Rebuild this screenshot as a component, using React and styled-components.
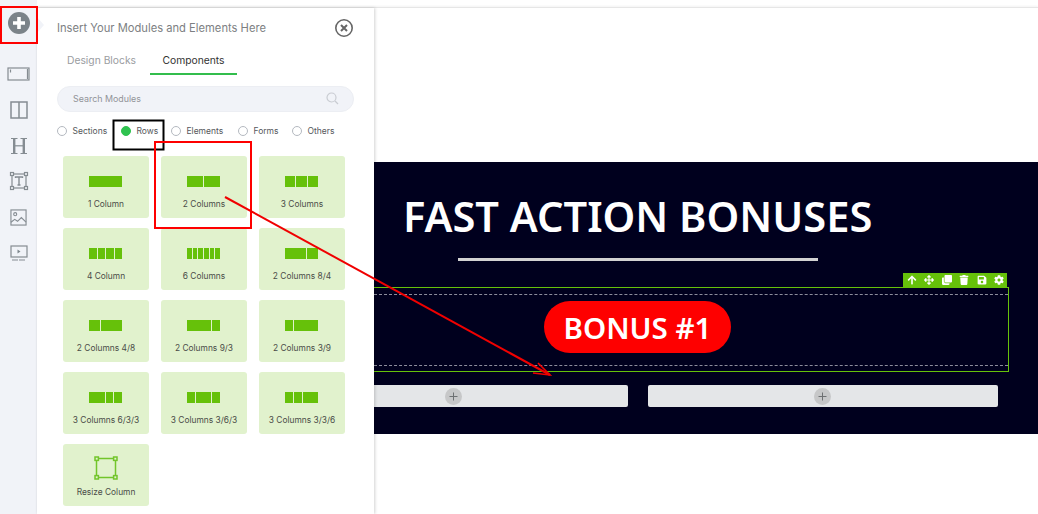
import React from 'react';
import styled, { createGlobalStyle } from 'styled-components';
import { FaArrowUp, FaArrowsAlt, FaClone, FaTrash, FaSave, FaCog } from 'react-icons/fa';

const GlobalStyle = createGlobalStyle`
  html, body { margin: 0; padding: 0; background: #fff; overflow: hidden; }
  * { box-sizing: border-box; }
`;

const UI_FONT = `Inter, "Noto Sans", sans-serif`;

const Page = styled.div`
  position: relative;
  width: 1038px;
  height: 514px;
  display: flex;
  overflow: hidden;
  background: #fff;
  font-family: ${UI_FONT};
`;

const Rail = styled.nav`
  width: 37px;
  flex: none;
  background: #f1f3f8;
  display: flex;
  flex-direction: column;
  align-items: center;
  padding-top: 11px;
`;

const AddButton = styled.div`
  width: 24px;
  height: 24px;
  margin-bottom: 27px;
  display: flex;
`;

const RailIcon = styled.div`
  width: 24px;
  height: 24px;
  margin-bottom: 11.8px;
  display: flex;
  align-items: center;
  justify-content: center;
`;

const Main = styled.div`
  flex: 1;
  display: flex;
  margin-top: 7px;
  border-top: 1px solid #e6e6e6;
  box-shadow: 0 -1px 2px rgba(0, 0, 0, 0.05);
`;

const Panel = styled.aside`
  position: relative;
  width: 337px;
  flex: none;
  background: #fff;
  box-shadow: 1px 0 3px rgba(0, 0, 0, 0.18);
  padding: 0 20px;
  z-index: 1;
  display: flex;
  flex-direction: column;
`;

const PanelNotch = styled.div`
  position: absolute;
  left: 0;
  top: 9px;
  width: 0;
  height: 0;
  border-left: 7px solid #f1f3f8;
  border-top: 8px solid transparent;
  border-bottom: 8px solid transparent;
`;

const PanelHead = styled.div`
  height: 39px;
  display: flex;
  align-items: center;
  justify-content: space-between;
`;

const PanelTitle = styled.div`
  font-size: 11.2px;
  color: #7d7f83;
  font-weight: 400;
`;

const Tabs = styled.div`
  display: flex;
  gap: 4px;
  height: 28px;
`;

const Tab = styled.div`
  width: ${(p) => p.$w}px;
  display: flex;
  justify-content: center;
  align-items: center;
  font-size: 10.3px;
  color: ${(p) => (p.$active ? '#333' : '#9a9c9f')};
  border-bottom: 2px solid ${(p) => (p.$active ? '#32bd4c' : 'transparent')};
`;

const SearchBox = styled.div`
  margin-top: 11px;
  height: 26px;
  width: 297px;
  border-radius: 13px;
  background: #f1f3f8;
  border: 1px solid #eceef3;
  display: flex;
  align-items: center;
  justify-content: space-between;
  padding: 0 14px 1px 15px;
  font-size: 8.9px;
  color: #929499;
`;

const RadioRow = styled.div`
  display: flex;
  align-items: center;
  margin-top: 13px;
  height: 12px;
`;

const Radio = styled.div`
  display: flex;
  align-items: center;
  gap: 5.5px;
  width: ${(p) => p.$w}px;
  font-size: 8.5px;
  color: #55575b;
`;

const RadioDot = styled.span`
  width: 10px;
  height: 10px;
  border-radius: 50%;
  flex: none;
  background: ${(p) => (p.$on ? '#2fc24f' : '#fff')};
  border: 1px solid ${(p) => (p.$on ? '#2fc24f' : '#b4b9c0')};
`;

const CardGrid = styled.div`
  display: grid;
  grid-template-columns: repeat(3, 86px);
  grid-auto-rows: 62px;
  column-gap: 12px;
  row-gap: 10px;
  margin: 19px 0 0 6px;
`;

const Card = styled.div`
  background: #e1f2cd;
  border-radius: 3px;
  display: flex;
  flex-direction: column;
  align-items: center;
  padding-top: 20px;
`;

const ResizeCard = styled(Card)`
  padding-top: 12px;
`;

const ColBars = styled.div`
  display: flex;
  gap: 1px;
  width: 33px;
  height: 11px;
  margin-right: 1px;
`;

const ColBar = styled.span`
  flex: ${(p) => p.$span} 0 0;
  background: #66c10a;
`;

const CardLabel = styled.div`
  margin-top: 12px;
  font-size: 8.4px;
  line-height: 10px;
  color: #4a4c48;
  white-space: nowrap;
`;

const ResizeLabel = styled(CardLabel)`
  margin-top: 7px;
`;

const Canvas = styled.main`
  flex: 1;
  padding-top: 154px;
  min-width: 0;
`;

const Section = styled.section`
  height: 272px;
  background: #00001e;
  display: flex;
  flex-direction: column;
`;

const Heading = styled.h1`
  margin: 25px 0 0 29px;
  font-family: "Noto Sans", "Open Sans", sans-serif;
  font-weight: 600;
  font-size: 41.6px;
  line-height: 58px;
  color: #fff;
  white-space: nowrap;
`;

const Rule = styled.div`
  width: 360px;
  height: 3px;
  margin: 13px 0 0 84px;
  background: #d2d2d2;
`;

const RowFrame = styled.div`
  position: relative;
  height: 85px;
  width: 635px;
  margin-top: 26px;
  border: 1px solid #66c10a;
  border-left: 0;
  padding: 6px 0;
`;

const RowInner = styled.div`
  height: 72px;
  border-top: 1px dashed #8d8d9c;
  border-bottom: 1px dashed #8d8d9c;
  display: flex;
  align-items: flex-start;
  padding: 6px 0 0 170px;
`;

const Pill = styled.div`
  width: 187px;
  height: 52px;
  border-radius: 26px;
  background: #fe0000;
  color: #fff;
  font-family: "Noto Sans", "Open Sans", sans-serif;
  font-weight: 600;
  font-size: 29.5px;
  display: flex;
  align-items: center;
  justify-content: center;
`;

const RowToolbar = styled.div`
  position: absolute;
  right: 1px;
  top: -15px;
  width: 104px;
  height: 14px;
  background: #66c10a;
  color: #fff;
  display: flex;
  align-items: center;
  gap: 7.4px;
  padding-left: 4px;
  font-size: 10px;
`;

const SlotRow = styled.div`
  display: flex;
  gap: 20px;
  margin-top: 13px;
`;

const Slot = styled.div`
  width: ${(p) => p.$w}px;
  height: 22px;
  background: #e4e6e8;
  border-radius: ${(p) => (p.$flush ? '0 2px 2px 0' : '2px')};
  display: flex;
  align-items: center;
  padding-left: ${(p) => p.$offset}px;
`;

const SlotPlus = styled.span`
  width: 17px;
  height: 17px;
  border-radius: 50%;
  background: #c6c7c8;
  display: flex;
  align-items: center;
  justify-content: center;
`;

const Annotations = styled.svg`
  position: absolute;
  inset: 0;
  z-index: 5;
  pointer-events: none;
`;

const layouts = [
  { label: '1 Column', spans: [1] },
  { label: '2 Columns', spans: [1, 1] },
  { label: '3 Columns', spans: [1, 1, 1] },
  { label: '4 Column', spans: [1, 1, 1, 1] },
  { label: '6 Columns', spans: [1, 1, 1, 1, 1, 1] },
  { label: '2 Columns 8/4', spans: [2, 1] },
  { label: '2 Columns 4/8', spans: [1, 2] },
  { label: '2 Columns 9/3', spans: [3, 1] },
  { label: '2 Columns 3/9', spans: [1, 3] },
  { label: '3 Columns 6/3/3', spans: [2, 1, 1] },
  { label: '3 Columns 3/6/3', spans: [1, 2, 1] },
  { label: '3 Columns 3/3/6', spans: [1, 1, 2] },
];

const radios = [
  { label: 'Sections', w: 64 },
  { label: 'Rows', w: 50, on: true },
  { label: 'Elements', w: 67 },
  { label: 'Forms', w: 54 },
  { label: 'Others', w: 60 },
];

const railStroke = { fill: 'none', stroke: '#858c92', strokeWidth: 1.2 };

function RailIcons() {
  return (
    <>
      <RailIcon>
        <svg width="24" height="16" viewBox="0 0 24 16" {...railStroke}>
          <rect x="1" y="2" width="21" height="12" />
          <path d="M3.5 3.5v3M20.5 3v10" />
        </svg>
      </RailIcon>
      <RailIcon>
        <svg width="20" height="20" viewBox="0 0 20 20" {...railStroke} strokeWidth="1.5">
          <rect x="2" y="2" width="16" height="16" />
          <path d="M10 2v16" />
        </svg>
      </RailIcon>
      <RailIcon>
        <svg width="20" height="20" viewBox="0 0 20 20" {...railStroke} strokeWidth="1.2">
          <path d="M2 2.5h6.5M2 17.5h6.5M11.5 2.5h6.5M11.5 17.5h6.5" />
          <path d="M5.2 2.5v15M14.8 2.5v15" strokeWidth="2.4" />
          <path d="M5 9.8h10" />
        </svg>
      </RailIcon>
      <RailIcon>
        <svg width="20" height="20" viewBox="0 0 20 20" {...railStroke}>
          <rect x="3" y="3" width="14" height="14" />
          <rect x="1.5" y="1.5" width="3" height="3" fill="#f1f3f8" />
          <rect x="15.5" y="1.5" width="3" height="3" fill="#f1f3f8" />
          <rect x="1.5" y="15.5" width="3" height="3" fill="#f1f3f8" />
          <rect x="15.5" y="15.5" width="3" height="3" fill="#f1f3f8" />
          <path d="M6.5 7V6h7v1M10 6v8M8.5 14h3" strokeWidth="1.4" />
        </svg>
      </RailIcon>
      <RailIcon>
        <svg width="17" height="17" viewBox="0 0 18 18" {...railStroke}>
          <rect x="1" y="1" width="16" height="16" />
          <circle cx="5.5" cy="5.5" r="1.6" />
          <path d="M1 14l4-3 3 2 4-4 5 5" />
        </svg>
      </RailIcon>
      <RailIcon>
        <svg width="18" height="18" viewBox="0 0 18 18" {...railStroke}>
          <rect x="1" y="2" width="16" height="11" />
          <path d="M7.5 5.5l3 2-3 2z" fill="#7f878d" stroke="none" />
          <path d="M2 16h14" strokeDasharray="6 1" />
        </svg>
      </RailIcon>
    </>
  );
}

function App() {
  return (
    <Page>
      <GlobalStyle />
      <Rail>
        <AddButton>
          <svg width="24" height="24" viewBox="0 0 24 24">
            <circle cx="12" cy="12" r="11" fill="#7b8389" />
            <path d="M12 6v12M6 12h12" stroke="#fff" strokeWidth="3.6" />
          </svg>
        </AddButton>
        <RailIcons />
      </Rail>
      <Main>
        <Panel>
          <PanelNotch />
          <PanelHead>
            <PanelTitle>Insert Your Modules and Elements Here</PanelTitle>
            <svg width="20" height="20" viewBox="0 0 20 20">
              <circle cx="10" cy="10" r="8.2" fill="none" stroke="#666" strokeWidth="1.6" />
              <path d="M7 7l6 6M13 7l-6 6" stroke="#666" strokeWidth="2" />
            </svg>
          </PanelHead>
          <Tabs>
            <Tab $w={89}>Design Blocks</Tab>
            <Tab $w={87} $active>Components</Tab>
          </Tabs>
          <SearchBox>
            Search Modules
            <svg width="13" height="13" viewBox="0 0 13 13" fill="none" stroke="#c9ccd2" strokeWidth="1.2">
              <circle cx="5.5" cy="5.5" r="4.5" />
              <path d="M9 9l3 3" />
            </svg>
          </SearchBox>
          <RadioRow>
            {radios.map((r) => (
              <Radio key={r.label} $w={r.w}>
                <RadioDot $on={r.on} />
                {r.label}
              </Radio>
            ))}
          </RadioRow>
          <CardGrid>
            {layouts.map((l) => (
              <Card key={l.label}>
                <ColBars>
                  {l.spans.map((s, i) => (
                    <ColBar key={i} $span={s} />
                  ))}
                </ColBars>
                <CardLabel>{l.label}</CardLabel>
              </Card>
            ))}
            <ResizeCard>
              <svg width="24" height="24" viewBox="0 0 24 24" fill="none" stroke="#72c52a" strokeWidth="1.5">
                <rect x="2.5" y="2.5" width="19" height="19" />
                <rect x="1" y="1" width="3.4" height="3.4" fill="#e1f2cd" />
                <rect x="19.6" y="1" width="3.4" height="3.4" fill="#e1f2cd" />
                <rect x="1" y="19.6" width="3.4" height="3.4" fill="#e1f2cd" />
                <rect x="19.6" y="19.6" width="3.4" height="3.4" fill="#e1f2cd" />
              </svg>
              <ResizeLabel>Resize Column</ResizeLabel>
            </ResizeCard>
          </CardGrid>
        </Panel>
        <Canvas>
          <Section>
            <Heading>FAST ACTION BONUSES</Heading>
            <Rule />
            <RowFrame>
              <RowToolbar>
                <FaArrowUp />
                <FaArrowsAlt />
                <FaClone />
                <FaTrash />
                <FaSave />
                <FaCog />
              </RowToolbar>
              <RowInner>
                <Pill>BONUS #1</Pill>
              </RowInner>
            </RowFrame>
            <SlotRow>
              <Slot $w={254} $flush $offset={71}>
                <SlotPlus>
                  <svg width="9" height="9" viewBox="0 0 9 9">
                    <path d="M4.5 0.5v8M0.5 4.5h8" stroke="#6d7072" strokeWidth="1" />
                  </svg>
                </SlotPlus>
              </Slot>
              <Slot $w={350} $offset={166}>
                <SlotPlus>
                  <svg width="9" height="9" viewBox="0 0 9 9">
                    <path d="M4.5 0.5v8M0.5 4.5h8" stroke="#6d7072" strokeWidth="1" />
                  </svg>
                </SlotPlus>
              </Slot>
            </SlotRow>
          </Section>
        </Canvas>
      </Main>
      <Annotations width="1038" height="514" viewBox="0 0 1038 514" fill="none">
        <rect x="1" y="7" width="36" height="36" stroke="#fe0000" strokeWidth="2" />
        <rect x="113.5" y="120.5" width="50" height="29" stroke="#000" strokeWidth="2" />
        <rect x="155" y="142" width="96" height="86" stroke="#fe0000" strokeWidth="2" />
        <path d="M225 197L550 375" stroke="#f00000" strokeWidth="2" />
        <path d="M538 363L550 375L533 373" stroke="#f00000" strokeWidth="1.6" />
      </Annotations>
    </Page>
  );
}

export default App;
